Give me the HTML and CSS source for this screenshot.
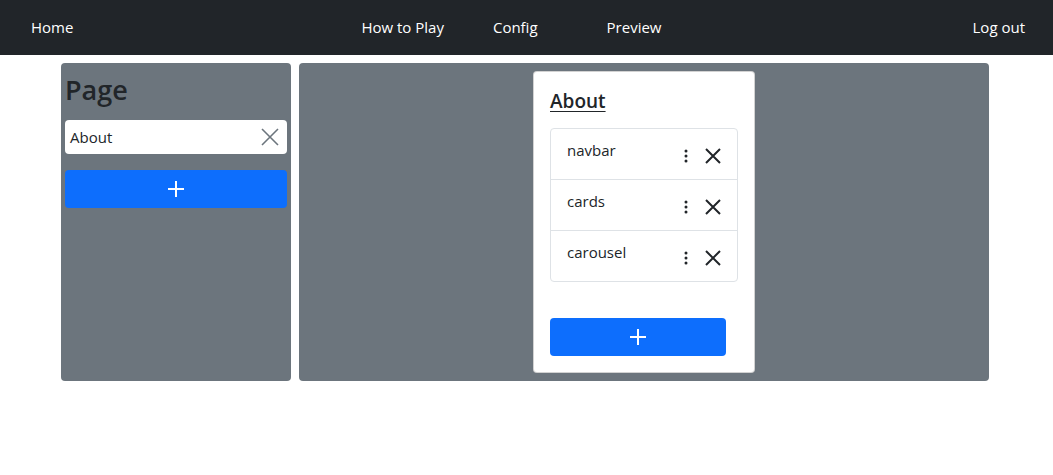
FILE: index.html
```html
<!DOCTYPE html>
<html lang="en">
<head>
<meta charset="utf-8">
<title>Pages</title>
<link rel="stylesheet" href="styles.css">
</head>
<body>
<nav class="navbar">
  <a class="nav-link home" href="#">Home</a>
  <div class="nav-center">
    <a class="nav-link howto" href="#">How to Play</a>
    <a class="nav-link config" href="#">Config</a>
    <a class="nav-link preview" href="#">Preview</a>
  </div>
  <a class="nav-link logout" href="#">Log out</a>
</nav>
<main class="layout">
  <aside class="side-panel">
    <h3 class="side-title">Page</h3>
    <div class="page-input">
      <span class="page-input-text">About</span>
      <svg class="input-clear" viewBox="0 0 18 18" width="18" height="18"><path d="M1 1L17 17M17 1L1 17" stroke="#6c757d" stroke-width="1.6" fill="none"/></svg>
    </div>
    <button class="btn-add">
      <svg viewBox="0 0 18 18" width="18" height="18"><path d="M9 1V17M1 9H17" stroke="#fff" stroke-width="2" fill="none"/></svg>
    </button>
  </aside>
  <section class="main-panel">
    <div class="card">
      <h5 class="card-title">About</h5>
      <ul class="list-group">
        <li class="list-item">
          <span class="item-name">navbar</span>
          <span class="item-actions">
            <svg class="dots" viewBox="0 0 4 14" width="4" height="14"><circle cx="2" cy="2" r="1.5" fill="#212529"/><circle cx="2" cy="7" r="1.5" fill="#212529"/><circle cx="2" cy="12" r="1.5" fill="#212529"/></svg>
            <svg class="close" viewBox="0 0 18 18" width="18" height="18"><path d="M2 2L16 16M16 2L2 16" stroke="#212529" stroke-width="2" fill="none"/></svg>
          </span>
        </li>
        <li class="list-item">
          <span class="item-name">cards</span>
          <span class="item-actions">
            <svg class="dots" viewBox="0 0 4 14" width="4" height="14"><circle cx="2" cy="2" r="1.5" fill="#212529"/><circle cx="2" cy="7" r="1.5" fill="#212529"/><circle cx="2" cy="12" r="1.5" fill="#212529"/></svg>
            <svg class="close" viewBox="0 0 18 18" width="18" height="18"><path d="M2 2L16 16M16 2L2 16" stroke="#212529" stroke-width="2" fill="none"/></svg>
          </span>
        </li>
        <li class="list-item">
          <span class="item-name">carousel</span>
          <span class="item-actions">
            <svg class="dots" viewBox="0 0 4 14" width="4" height="14"><circle cx="2" cy="2" r="1.5" fill="#212529"/><circle cx="2" cy="7" r="1.5" fill="#212529"/><circle cx="2" cy="12" r="1.5" fill="#212529"/></svg>
            <svg class="close" viewBox="0 0 18 18" width="18" height="18"><path d="M2 2L16 16M16 2L2 16" stroke="#212529" stroke-width="2" fill="none"/></svg>
          </span>
        </li>
      </ul>
      <button class="btn-add card-add">
        <svg viewBox="0 0 18 18" width="18" height="18"><path d="M9 1V17M1 9H17" stroke="#fff" stroke-width="2" fill="none"/></svg>
      </button>
    </div>
  </section>
</main>
</body>
</html>
```
FILE: styles.css
```css
* { box-sizing: border-box; }
body {
  margin: 0;
  font-family: "Open Sans", "Noto Sans", sans-serif;
  font-size: 15px;
  line-height: 1.5;
  color: #212529;
  background: #fff;
}
.navbar {
  height: 55px;
  background: #212529;
  display: flex;
  align-items: center;
  padding: 0 28px 0 31px;
}
.nav-link {
  color: #fff;
  text-decoration: none;
  font-size: 15px;
}
.nav-center {
  display: flex;
  margin-left: 288px;
  flex: 1;
}
.config { margin-left: 49px; }
.preview { margin-left: 69px; }
.layout {
  display: flex;
  gap: 8px;
  margin: 8px 0 0 61px;
  width: 928px;
  height: 318px;
}
.side-panel {
  width: 230px;
  background: #6c757d;
  border-radius: 4px;
  padding: 11px 4px 8px;
}
.side-title {
  margin: 0 0 14px;
  font-size: 27px;
  font-weight: 600;
  line-height: 1.2;
}
.page-input {
  height: 34px;
  background: #fff;
  border-radius: 4px;
  display: flex;
  align-items: center;
  justify-content: space-between;
  padding: 0 8px 0 5px;
}
.page-input-text { font-size: 15px; }
.input-clear { display: block; }
.btn-add {
  display: flex;
  align-items: center;
  justify-content: center;
  width: 100%;
  height: 38px;
  margin-top: 16px;
  border: none;
  border-radius: 4px;
  background: #0d6efd;
  padding: 0;
}
.main-panel {
  flex: 1;
  background: #6c757d;
  border-radius: 4px;
  display: flex;
  justify-content: center;
  padding: 8px 0;
}
.card {
  width: 222px;
  background: #fff;
  border: 1px solid rgba(0,0,0,0.175);
  border-radius: 4px;
  padding: 17px 16px 16px;
}
.card-title {
  margin: 0 0 15px;
  font-size: 19px;
  font-weight: 600;
  line-height: 24px;
  text-decoration: underline;
  text-underline-offset: 3px;
}
.list-group {
  list-style: none;
  margin: 0;
  padding: 0;
  border: 1px solid #dee2e6;
  border-radius: 4px;
}
.list-item {
  height: 51px;
  display: flex;
  justify-content: space-between;
  align-items: flex-start;
  padding: 8px 16px;
  border-top: 1px solid #dee2e6;
}
.list-item:first-child { border-top: none; height: 50px; }
.item-name { font-size: 15px; line-height: 24px; margin-top: 1px; }
.item-actions {
  display: flex;
  align-items: center;
  gap: 16px;
  height: 34px;
  margin-top: 2px;
  margin-right: -1px;
}
.card-add {
  width: 176px;
  margin-top: 36px;
}
```
